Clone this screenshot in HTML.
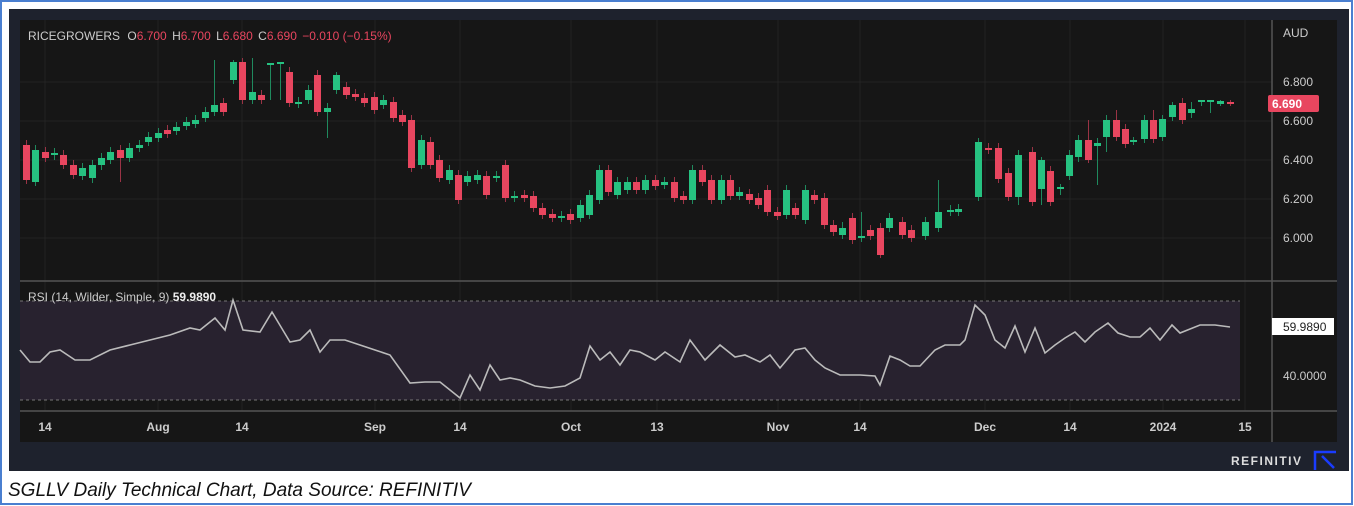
<!DOCTYPE html>
<html><head><meta charset="utf-8"><style>
html,body{margin:0;padding:0;background:#fff;width:1354px;height:506px;overflow:hidden}
svg{display:block}
text{font-family:"Liberation Sans",sans-serif}
</style></head><body>
<svg width="1354" height="506" xmlns="http://www.w3.org/2000/svg">
<rect x="1" y="1" width="1351" height="503" fill="#fff" stroke="#4a7fd0" stroke-width="2"/>
<rect x="9" y="9" width="1340" height="462" fill="#1e222d"/>
<rect x="20" y="20" width="1317" height="422" fill="#161616"/>
<g stroke="#232323" stroke-width="1">
<line x1="20" y1="82" x2="1272" y2="82"/><line x1="20" y1="121" x2="1272" y2="121"/><line x1="20" y1="160" x2="1272" y2="160"/><line x1="20" y1="199" x2="1272" y2="199"/><line x1="20" y1="238" x2="1272" y2="238"/>
<line x1="45" y1="20" x2="45" y2="411"/><line x1="158" y1="20" x2="158" y2="411"/><line x1="242" y1="20" x2="242" y2="411"/><line x1="375" y1="20" x2="375" y2="411"/><line x1="460" y1="20" x2="460" y2="411"/><line x1="571" y1="20" x2="571" y2="411"/><line x1="657" y1="20" x2="657" y2="411"/><line x1="778" y1="20" x2="778" y2="411"/><line x1="860" y1="20" x2="860" y2="411"/><line x1="985" y1="20" x2="985" y2="411"/><line x1="1070" y1="20" x2="1070" y2="411"/><line x1="1163" y1="20" x2="1163" y2="411"/><line x1="1245" y1="20" x2="1245" y2="411"/>
</g>
<rect x="20" y="301" width="1220" height="99" fill="#28222f"/>
<line x1="20" y1="301" x2="1240" y2="301" stroke="#777" stroke-dasharray="3,3"/>
<line x1="20" y1="400" x2="1240" y2="400" stroke="#777" stroke-dasharray="3,3"/>
<line x1="20" y1="281" x2="1337" y2="281" stroke="#555" stroke-width="1.5"/>
<line x1="20" y1="411" x2="1337" y2="411" stroke="#555" stroke-width="1.5"/>
<line x1="1272" y1="20" x2="1272" y2="442" stroke="#555" stroke-width="1.5"/>

<path stroke="#1f8a5e" stroke-width="1" fill="none" d="M35.5 145V186M54.5 148V160M82.5 163V180M92.5 160V183M101.5 153V170M110.5 147V164M129.5 143V162M139.5 140V152M148.5 132V146M158.5 128V142M176.5 122V135M186.5 117V130M195.5 115V128M205.5 107V122M214.5 60V116M233.5 60V84M252.5 58V104M270.5 63V100M280.5 62V100M298.5 97V108M308.5 85V104M327.5 103V138M336.5 72V94M383.5 95V109M421.5 135V169M449.5 165V184M467.5 171V186M477.5 170V184M496.5 171V182M514.5 191V202M561.5 211V222M580.5 200V222M589.5 190V219M599.5 165V204M617.5 177V199M627.5 177V194M645.5 175V194M664.5 177V189M692.5 165V204M721.5 175V204M739.5 187V200M786.5 185V219M805.5 185V224M842.5 222V239M861.5 212V242M889.5 213V232M925.5 217V240M938.5 180V232M950.5 205V216M958.5 204V216M978.5 138V201M1018.5 150V205M1041.5 157V205M1060.5 184V195M1069.5 150V180M1078.5 135V162M1097.5 138V185M1106.5 115V152M1133.5 137V145M1144.5 115V143M1162.5 115V141M1172.5 102V121M1191.5 102V118M1201.5 100V106M1210.5 100V113M1220.5 100V106"/>
<path stroke="#9a3345" stroke-width="1" fill="none" d="M26.5 140V184M45.5 147V162M63.5 150V169M73.5 160V179M120.5 145V182M167.5 125V138M223.5 98V116M242.5 58V104M261.5 90V104M289.5 67V107M317.5 70V116M346.5 82V99M355.5 89V101M364.5 93V107M374.5 92V114M393.5 97V122M402.5 110V126M411.5 115V172M430.5 137V169M439.5 155V182M458.5 170V204M486.5 171V199M505.5 160V202M524.5 190V202M533.5 191V212M542.5 203V219M552.5 209V222M570.5 209V224M608.5 165V196M636.5 177V194M655.5 175V190M674.5 177V202M683.5 191V204M702.5 165V186M711.5 175V204M730.5 175V200M749.5 189V204M758.5 193V209M767.5 185V216M777.5 207V220M795.5 203V219M814.5 190V204M824.5 193V229M833.5 220V236M852.5 213V244M870.5 225V240M880.5 223V258M902.5 217V239M911.5 225V242M988.5 143V154M998.5 143V183M1008.5 168V201M1032.5 147V206M1050.5 166V206M1088.5 120V163M1116.5 110V141M1125.5 124V148M1153.5 110V143M1182.5 98V124M1230.5 100V106"/>

<path fill="#26c281" d="M32 150h7v32h-7zM51 153h7v2h-7zM79 168h7v8h-7zM89 165h7v13h-7zM98 158h7v7h-7zM107 152h7v8h-7zM126 148h7v10h-7zM136 145h7v3h-7zM145 137h7v5h-7zM155 133h7v5h-7zM173 127h7v4h-7zM183 122h7v4h-7zM192 120h7v4h-7zM202 112h7v6h-7zM211 105h7v7h-7zM230 62h7v18h-7zM249 92h7v8h-7zM267 63h7v2h-7zM277 62h7v2h-7zM295 102h7v2h-7zM305 90h7v10h-7zM324 108h7v4h-7zM333 75h7v15h-7zM380 100h7v5h-7zM418 140h7v25h-7zM446 170h7v10h-7zM464 176h7v6h-7zM474 175h7v5h-7zM493 176h7v2h-7zM511 196h7v2h-7zM558 216h7v2h-7zM577 205h7v13h-7zM586 195h7v20h-7zM596 170h7v30h-7zM614 182h7v13h-7zM624 182h7v8h-7zM642 180h7v10h-7zM661 182h7v3h-7zM689 170h7v30h-7zM718 180h7v20h-7zM736 192h7v4h-7zM783 190h7v25h-7zM802 190h7v30h-7zM839 228h7v7h-7zM858 236h7v2h-7zM886 218h7v10h-7zM922 222h7v14h-7zM935 212h7v16h-7zM947 210h7v2h-7zM955 209h7v3h-7zM975 142h7v55h-7zM1015 155h7v42h-7zM1038 160h7v29h-7zM1057 187h7v2h-7zM1066 155h7v21h-7zM1075 140h7v17h-7zM1094 143h7v3h-7zM1103 120h7v17h-7zM1130 140h7v2h-7zM1141 120h7v19h-7zM1159 119h7v18h-7zM1169 105h7v12h-7zM1188 109h7v4h-7zM1198 100h7v2h-7zM1207 100h7v2h-7zM1217 101h7v3h-7z"/>
<path fill="#e8465f" d="M23 145h7v35h-7zM42 152h7v6h-7zM60 155h7v10h-7zM70 165h7v10h-7zM117 150h7v8h-7zM164 130h7v4h-7zM220 103h7v9h-7zM239 62h7v38h-7zM258 95h7v5h-7zM286 72h7v31h-7zM314 75h7v37h-7zM343 87h7v8h-7zM352 94h7v3h-7zM361 98h7v5h-7zM371 97h7v13h-7zM390 102h7v16h-7zM399 115h7v7h-7zM408 120h7v48h-7zM427 142h7v23h-7zM436 160h7v18h-7zM455 175h7v25h-7zM483 176h7v19h-7zM502 165h7v33h-7zM521 195h7v3h-7zM530 196h7v12h-7zM539 208h7v7h-7zM549 214h7v4h-7zM567 214h7v6h-7zM605 170h7v22h-7zM633 182h7v8h-7zM652 180h7v6h-7zM671 182h7v16h-7zM680 196h7v4h-7zM699 170h7v12h-7zM708 180h7v20h-7zM727 180h7v16h-7zM746 194h7v6h-7zM755 198h7v7h-7zM764 190h7v22h-7zM774 212h7v4h-7zM792 208h7v7h-7zM811 195h7v5h-7zM821 198h7v27h-7zM830 225h7v7h-7zM849 218h7v22h-7zM867 230h7v6h-7zM877 228h7v27h-7zM899 222h7v13h-7zM908 230h7v8h-7zM985 148h7v2h-7zM995 148h7v31h-7zM1005 173h7v24h-7zM1029 152h7v50h-7zM1047 171h7v31h-7zM1085 140h7v20h-7zM1113 120h7v17h-7zM1122 129h7v15h-7zM1150 120h7v19h-7zM1179 103h7v17h-7zM1227 102h7v2h-7z"/>

<polyline fill="none" stroke="#bbb" stroke-width="1.6" points="20,350 30,362 40,362 50,352 60,350 75,360 90,360 110,350 130,345 150,340 170,335 190,328 200,330 215,318 225,330 233,300 243,330 260,332 272,312 290,342 300,340 310,330 320,352 330,340 345,340 360,345 375,350 390,355 410,383 425,382 440,382 450,390 460,398 470,375 480,390 490,365 500,380 510,378 520,380 535,386 550,388 565,386 580,378 590,346 600,360 610,352 620,365 630,350 640,352 655,360 665,352 680,362 690,340 705,360 720,345 735,357 745,355 760,362 770,355 780,368 795,350 805,348 815,360 825,368 840,375 860,375 875,376 880,385 890,356 900,360 910,366 920,366 935,350 945,345 960,345 965,340 975,305 985,315 995,340 1005,348 1015,326 1025,352 1035,328 1045,353 1055,345 1065,338 1075,332 1085,342 1095,332 1108,323 1118,333 1130,337 1140,337 1150,328 1160,340 1172,325 1180,333 1200,325 1215,325 1230,327"/>

<text x="28" y="40" font-size="12" fill="#ccc">RICEGROWERS <tspan dx="4">O</tspan><tspan fill="#e8465f">6.700</tspan> <tspan dx="2">H</tspan><tspan fill="#e8465f">6.700</tspan> <tspan dx="2">L</tspan><tspan fill="#e8465f">6.680</tspan> <tspan dx="2">C</tspan><tspan fill="#e8465f">6.690</tspan> <tspan dx="2" fill="#e8465f">−0.010 (−0.15%)</tspan></text>
<text x="28" y="301" font-size="12" fill="#ccc">RSI (14, Wilder, Simple, 9) <tspan fill="#eee" font-weight="bold">59.9890</tspan></text>
<g font-size="12" fill="#ccc">
<text x="1283" y="37">AUD</text>
<text x="1283" y="86">6.800</text><text x="1283" y="125">6.600</text><text x="1283" y="164">6.400</text><text x="1283" y="203">6.200</text><text x="1283" y="242">6.000</text>
<text x="1283" y="380">40.0000</text>
</g>
<rect x="1268" y="95" width="51" height="17" rx="2" fill="#e8465f"/>
<text x="1272" y="108" font-size="12" fill="#fff" font-weight="bold">6.690</text>
<rect x="1272" y="318" width="62" height="17" fill="#fff"/>
<text x="1283" y="331" font-size="12" fill="#222">59.9890</text>
<g font-size="12" fill="#ccc" font-weight="bold" text-anchor="middle">
<text x="45" y="431">14</text><text x="158" y="431">Aug</text><text x="242" y="431">14</text><text x="375" y="431">Sep</text><text x="460" y="431">14</text><text x="571" y="431">Oct</text><text x="657" y="431">13</text><text x="778" y="431">Nov</text><text x="860" y="431">14</text><text x="985" y="431">Dec</text><text x="1070" y="431">14</text><text x="1163" y="431">2024</text><text x="1245" y="431">15</text>
</g>
<text x="1231" y="465" font-size="12" fill="#ddd" font-weight="bold" letter-spacing="1.5">REFINITIV</text>
<path d="M1315 470 V452 H1336 M1322 456 L1334 468" stroke="#1a3cff" stroke-width="2.5" fill="none"/>
<text x="8" y="496" font-size="19" font-style="italic" fill="#111">SGLLV Daily Technical Chart, Data Source: REFINITIV</text>
</svg>
</body></html>
